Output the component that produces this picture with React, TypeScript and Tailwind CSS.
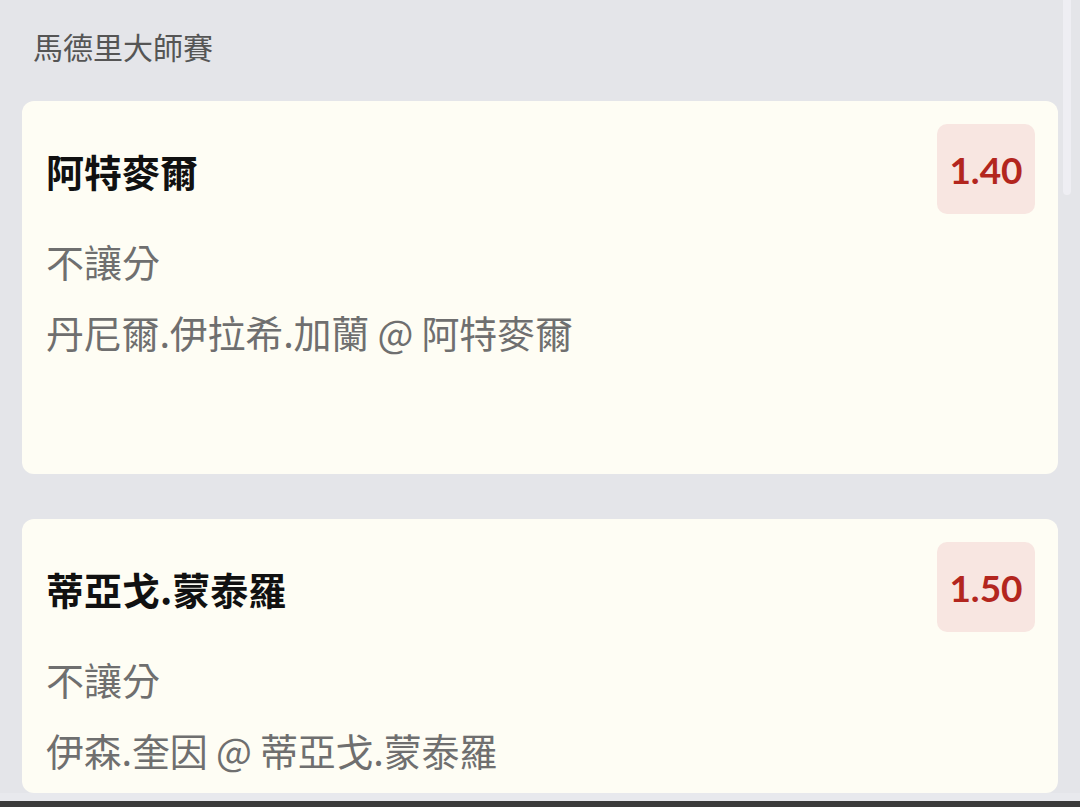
type Bet = {
  pick: string;
  market: string;
  match: string;
  odds: string;
  tall?: boolean;
};

const bets: Bet[] = [
  {
    pick: "阿特麥爾",
    market: "不讓分",
    match: "丹尼爾.伊拉希.加蘭 @ 阿特麥爾",
    odds: "1.40",
    tall: true,
  },
  {
    pick: "蒂亞戈.蒙泰羅",
    market: "不讓分",
    match: "伊森.奎因 @ 蒂亞戈.蒙泰羅",
    odds: "1.50",
  },
];

const cjk = "font-['Noto_Sans_CJK_TC','Noto_Sans',sans-serif]";

const BetCard = ({ bet }: { bet: Bet }) => {
  return (
    <div
      className={`rounded-xl bg-[#fefdf4] pl-6 pr-[23px] pt-[23px] ${
        bet.tall ? "pb-[114px]" : "pb-[15px]"
      }`}
    >
      <div className="flex items-center justify-between h-[90px]">
        <h3
          className={`${cjk} text-[38px] font-bold text-[#111111] leading-none pt-1`}
        >
          {bet.pick}
        </h3>
        <div className="flex items-center justify-center w-[98px] h-[90px] rounded-[10px] bg-[#f8e6e1]">
          <span className="font-['Lato',sans-serif] text-[37px] font-bold text-[#b3261e] leading-none">
            {bet.odds}
          </span>
        </div>
      </div>
      <p
        className={`${cjk} mt-[18px] text-[38px] leading-[57px] text-[#6f6f6f]`}
      >
        {bet.market}
      </p>
      <p
        className={`${cjk} mt-[14px] text-[38px] tracking-[-0.2px] leading-[57px] text-[#6f6f6f]`}
      >
        {bet.match}
      </p>
    </div>
  );
};

const App = () => {
  return (
    <div className="relative w-[1080px] h-[807px] overflow-hidden bg-[#e4e5e9]">
      <div className="h-[793px] overflow-hidden pl-[22px] pr-[22px]">
        <h2
          className={`${cjk} pt-6 pl-[11px] text-[30px] leading-[44px] text-[#555555] mb-[33px]`}
        >
          馬德里大師賽
        </h2>
        <div className="flex flex-col gap-[45px]">
          {bets.map((b) => (
            <BetCard key={b.pick} bet={b} />
          ))}
        </div>
      </div>
      <div className="h-[8px] bg-[#e8e9ed]" />
      <div className="h-[6px] bg-[#3b3b3b]" />
      {/* scrollbar thumb */}
      <div className="absolute right-[9px] top-0 w-[8px] h-[195px] rounded-b-full bg-[#eeeef3]" />
    </div>
  );
};

export default App;
